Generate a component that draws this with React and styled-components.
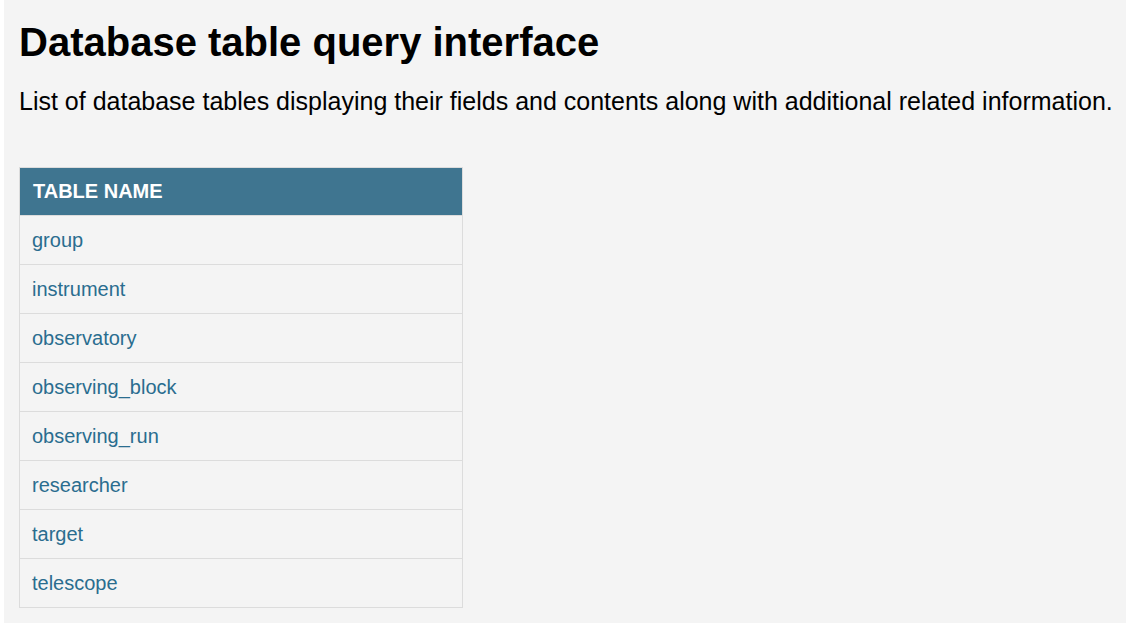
import React from 'react';
import styled, {createGlobalStyle} from 'styled-components';

const GlobalStyle = createGlobalStyle`
    html, body {
        margin: 0;
        padding: 0;
        background: #fff;
    }
    body {
        font-family: "Liberation Sans", Arial, sans-serif;
    }
`;

const Page = styled.div`
    margin-left: 4px;
    width: 1122px;
    min-height: 623px;
    background-color: #f4f4f4;
    padding: 19px 8px 0 15px;
    box-sizing: border-box;
`;

const Title = styled.h1`
    margin: 0;
    font-size: 40px;
    line-height: 46px;
    font-weight: bold;
    color: #000;
`;

const Lead = styled.p`
    margin: 22px 0 51px 0;
    font-size: 25px;
    line-height: 29px;
    white-space: nowrap;
    color: #000;
`;

const Table = styled.table`
    border-collapse: collapse;
    width: 444px;
    border: 1px solid #dcdcdc;
`;

const HeadCell = styled.th`
    background-color: #3f7590;
    color: #fff;
    text-align: left;
    font-size: 20px;
    font-weight: bold;
    height: 48px;
    padding: 0 13px;
    box-sizing: border-box;
`;

const Cell = styled.td`
    height: 49px;
    padding: 0 12px;
    border-top: 1px solid #dcdcdc;
    box-sizing: border-box;
`;

const TableLink = styled.a`
    color: #2a6d8f;
    font-size: 20px;
    text-decoration: none;
`;

const tables = ['group','instrument','observatory','observing_block','observing_run','researcher','target','telescope'];

export default function App() {
    return (
        <>
            <GlobalStyle/>
            <Page>
                <Title>Database table query interface</Title>
                <Lead>List of database tables displaying their fields and contents along with additional related information.</Lead>
                <Table>
                    <thead>
                        <tr><HeadCell>TABLE NAME</HeadCell></tr>
                    </thead>
                    <tbody>
                        {tables.map(name => (
                            <tr key={name}>
                                <Cell><TableLink href="#">{name}</TableLink></Cell>
                            </tr>
                        ))}
                    </tbody>
                </Table>
            </Page>
        </>
    );
}
